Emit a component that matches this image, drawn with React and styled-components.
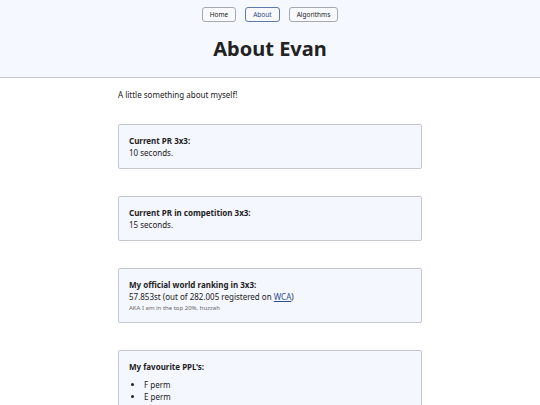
import styled, { createGlobalStyle } from "styled-components";

const GlobalStyle = createGlobalStyle`
  body {
    margin: 0;
    background: #ffffff;
    font-family: "Noto Sans", "Open Sans", sans-serif;
    font-size: 8px;
    line-height: 12px;
    color: #222222;
  }
`;

const Header = styled.header`
  background: #f5f8ff;
  border-bottom: 1px solid #c6c8d0;
  padding: 7px 0 16px;
  display: flex;
  flex-direction: column;
  align-items: center;
`;

const Nav = styled.nav`
  display: flex;
  gap: 9px;
  margin-bottom: 15px;
`;

const NavButton = styled.button`
  font-family: inherit;
  font-size: 6.5px;
  line-height: 9px;
  height: 15px;
  padding: 0 7px;
  border-radius: 3px;
  background: #f8f9fc;
  border: 1px solid ${(p) => (p.active ? "#5f79a8" : "#a6a9b3")};
  color: ${(p) => (p.active ? "#2d4a86" : "#222222")};
  cursor: pointer;
`;

const Title = styled.h1`
  margin: 0;
  font-size: 20px;
  line-height: 24px;
  font-weight: 700;
  color: #222222;
`;

const Main = styled.main`
  width: 304px;
  margin: 0 auto;
  padding-top: 11px;
`;

const Intro = styled.p`
  margin: 0 0 23px;
`;

const Card = styled.section`
  background: #f5f7fe;
  border: 1px solid #c4c6d0;
  border-radius: 2px;
  padding: 10px 10px 9px;
  margin-bottom: 27px;
`;

const CardTitle = styled.div`
  font-weight: 700;
  margin: ${(p) => (p.spaced ? "0 0 6px" : "0")};
`;

const Small = styled.div`
  font-size: 6px;
  line-height: 10px;
  color: #666666;
`;

const Link = styled.a`
  color: #2b4c9b;
  text-decoration: underline;
`;

const List = styled.ul`
  margin: 0;
  padding-left: 15px;
  li::marker {
    font-size: 8px;
  }
`;

export default function App() {
  return (
    <>
      <GlobalStyle />
      <Header>
        <Nav>
          <NavButton>Home</NavButton>
          <NavButton active>About</NavButton>
          <NavButton>Algorithms</NavButton>
        </Nav>
        <Title>About Evan</Title>
      </Header>
      <Main>
        <Intro>A little something about myself!</Intro>
        <Card>
          <CardTitle>Current PR 3x3:</CardTitle>
          <div>10 seconds.</div>
        </Card>
        <Card>
          <CardTitle>Current PR in competition 3x3:</CardTitle>
          <div>15 seconds.</div>
        </Card>
        <Card>
          <CardTitle>My official world ranking in 3x3:</CardTitle>
          <div>
            57.853st (out of 282.005 registered on <Link href="#">WCA</Link>)
          </div>
          <Small>AKA I am in the top 20%, huzzah</Small>
        </Card>
        <Card>
          <CardTitle spaced>My favourite PPL's:</CardTitle>
          <List>
            <li>F perm</li>
            <li>E perm</li>
          </List>
        </Card>
      </Main>
    </>
  );
}
